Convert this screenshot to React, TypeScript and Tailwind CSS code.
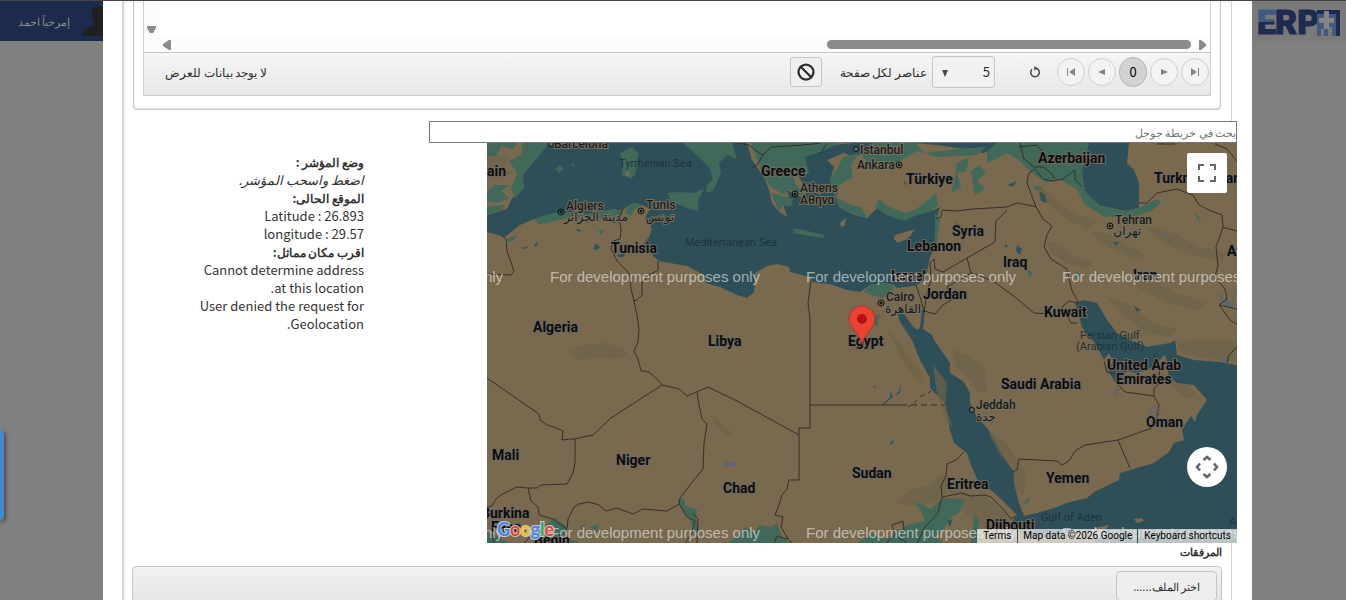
import { Ban } from 'lucide-react';

const SEA = '#2f4f58';
const LAND = '#78694f';
const GREEN = '#41695a';
const SCRUB = '#6c6349';

const greens = [
  'M0 0H30L26 6L14 3L10 12L0 14Z',
  'M36 0H62L50 15L36 32L37 45L28 55L24 46L30 30L22 18L34 12Z',
  'M0 48L8 42L22 42L14 48L22 55L10 60L0 58Z',
  'M0 63L18 62L14 68L0 71Z',
  'M47 76L67 70L80 69L100 71L127 66L136 68L132 77L104 74L80 75L60 80L52 81Z',
  'M139 66L147 60L156 62L148 66L144 73L138 70Z',
  'M20 96L30 92L26 98L21 99Z',
  'M111 88L118 86L114 92Z',
  'M264 0H352L336 8L318 14L322 30L314 33L304 24L308 40L321 56L302 46L297 52L284 44L276 32Z',
  'M284 50L306 56L304 64L296 62L292 69Z',
  'M350 26L356 14L372 10L385 0H428L438 10L470 6L499 4L490 12L450 14L430 8L410 20L380 18L372 10L364 22L366 34L352 42L350 55L364 62L374 64L380 75L366 71L352 64L343 37Z',
  'M392 56L400 63L418 70L428 67L440 58L449 50L451 62L444 68L430 72L417 78L400 72L388 64Z',
  'M448 70L453 76L450 100L446 110L448 92Z',
  'M470 20L482 14L479 28L470 30L474 44L464 50L468 34Z',
  'M484 28L492 22L499 30L490 38L498 46L488 52Z',
  'M510 0H602L595 30L598 48L612 62L640 68L654 64L670 56L674 60L664 68L645 74L618 74L598 62L590 46L572 36L560 40L545 30L533 18L520 10L500 20L500 8Z',
  'M377 149L383 142L397 140L408 144L402 152L394 155Z',
  'M388 173L393 171L390 184L387 180Z',
  'M190 357L197 356L199 363L210 367L209 376L212 386L208 392L202 374L196 368Z',
  'M60 381L68 375L80 384L78 394L92 400H45L52 390Z',
  'M92 384L98 382L96 388Z M103 384L112 381L110 390Z',
  'M0 389L12 394L22 400H0Z',
  'M258 384L268 390L272 382L284 384L290 380L294 392L302 400H240L252 392Z',
  'M370 400L385 391L400 396L420 382L438 378L434 368L427 358L444 366L455 355L478 356L472 370L466 372L458 384L450 394L456 400Z',
  'M488 370L492 378L491 400H484Z',
  'M536 360L543 354L542 359L538 361Z',
  'M540 126L546 130L542 135Z M588 130L594 132L590 138Z',
  'M708 70L715 77L710 76Z M545 42L556 45L550 48Z',
];

const scrubs = [
  'M0 2L8 12L24 14L14 26L26 30L10 36L0 34Z',
  'M80 208L96 202L118 200L136 206L140 212L128 216L110 214L92 218Z',
  'M560 98L576 104L588 114L606 120L600 126L580 120L564 110Z',
  'M604 88L624 92L640 102L658 112L648 116L626 106L610 98Z',
  'M656 82L690 92L712 104L740 110L735 118L704 112L676 100Z',
  'M640 130L668 138L690 150L720 160L712 168L680 160L650 144Z',
  'M620 154L640 160L666 180L690 186L684 194L660 190L636 172Z',
  'M400 186L414 200L424 216L436 232L432 240L418 222Z',
  'M464 206L484 214L498 224L500 250L490 248L482 236L470 224Z',
  'M502 290L518 298L530 318L540 330L536 352L528 346L526 326L512 310Z',
  'M410 360L424 346L446 342L450 334L462 330L460 346L452 358L430 364Z',
  'M684 240L702 242L708 252L698 256Z',
  'M690 198L750 197V219L708 214L692 208Z',
  'M224 272L238 284L246 290L240 292L230 284Z',
  'M446 222L460 240L458 262L466 286L456 272L450 250Z',
  'M462 346L500 354L520 372L524 386L498 384L480 372Z',
  'M550 40L570 58L590 72L612 78L600 86L576 74L556 56Z',
];

const lakes = [
  'M106 106L109 100L113 104L110 107Z',
  'M47 102L52 98L49 104Z M34 105L42 103L38 106Z',
  'M88 86L95 87L92 89Z',
  'M130 112L138 110L137 114L132 114Z',
  'M552 48L558 52L560 60L554 58Z',
  'M520 42L530 38L526 44Z',
  'M530 102L535 106L533 112L529 108Z M518 100L521 104L518 104Z',
  'M626 99L632 99L629 103Z',
  'M646 162L654 167L650 169Z',
  'M386 243L389 243L388 245Z M395 262L403 254L404 248L406 255L412 248L414 238L413 250L403 256L397 262Z',
  'M403 299L408 297L404 302Z',
  'M460 378L466 376L463 384Z',
  'M562 50L570 60L566 55Z',
  'M417 37L420 41L418 42Z',
  'M467 80L474 82L470 84Z',
];

const borders = [
  // Maghreb
  'M14 92L19 96L20 108L27 128L24 132L0 131',
  'M136 66L132 76L134 86L133 96L126 98L124 106L130 118L140 128L143 132L144 146L147 158L150 172L152 186L151 199L147 208L151 216L154 228L162 229L170 236L175 242',
  'M171 118L171 127L162 132L155 140L155 152L150 157L146 158',
  'M0 235L52 271L53 277L60 282L67 284L76 288L75 297L84 296L87 296L106 292L124 275L175 242L192 246L200 253L221 244L250 258L312 292',
  'M88 296V320L86 330L80 341L54 342L50 345L41 345L30 344L14 352L9 356L5 363L0 364',
  'M41 345L44 358L51 364L52 372L66 376L80 386L81 376L87 364L92 361L102 359L112 362L119 368L130 365L146 371L156 366L180 368L192 361L193 355L203 342L216 326L217 300L220 281L215 276L212 262L210 249',
  'M192 361L200 374L208 378L204 392L198 400 M206 370L211 376L210 400',
  // Egypt, Libya, Sudan
  'M324 138L321 160L323 176V285H312V337L302 337L300 346L295 352L292 362L288 372L296 374L294 384L301 396L305 400',
  'M323 262H420 M424 262H430 M434 262H440 M444 262H450 M454 262H458',
  'M421 264L424 262 M427 260L430 257 M433 254L438 251 M441 250L444 248',
  'M477 309L469 317L460 321L459 333L454 343L455 354L451 370L438 384L430 400',
  'M455 354L466 352L474 350L483 353L498 352L504 354L516 366L524 376L529 373',
  'M399 400L408 392L405 382L416 378L417 387L412 395L420 400',
  'M287 400L290 393L300 396',
  'M7 400L5 390 M37 400L44 393L50 400',
  // Levant and Iraq
  'M429 142L434 157L437 169L440 150L444 136L443 120L447 116L448 126L456 129L480 115L508 99L509 78L520 67',
  'M480 115L484 130L460 144L466 156L456 162L448 171L437 168',
  'M448 76L454 74L455 67L470 68L486 66L520 64L530 60L546 63L549 64',
  'M484 130L506 138L528 154L547 170L580 172L584 180L590 180',
  'M549 64L540 40L542 30L548 26L556 36L566 38L576 36L588 27L588 36L595 44',
  'M549 64L556 76L565 83L560 92L557 104L564 116L580 126L585 148L592 160',
  'M592 160L582 158L576 163L574 172',
  'M533 0L537 16L547 24L556 24L564 30L568 36 M532 4L550 2L562 16',
  'M250 0L262 2L268 7L276 12L270 22L264 26 M276 12L284 4L316 2L334 0 M334 10L340 0',
  'M652 60L660 60L670 50L690 46L706 52L712 62L724 68L735 72L736 84L729 104L731 122L728 134L738 146L740 156L732 162L744 178L750 181',
  'M735 84L750 88 M732 162L750 166 M670 1H688 M728 1L740 6L750 18',
  // Arabian peninsula
  'M525 329L530 327L532 316L570 318L575 322L582 318L588 308L598 302L631 297L643 325 M631 297L665 285',
  'M627 237L638 249L667 253L672 262L670 275 M667 253L667 245L674 240L672 228 M667 212L670 220',
  'M617 218L620 229L627 231 M740 221L742 212L750 204',
];

const countries: [string, number, number][] = [
  ['ain', 0, 33],
  ['Greece', 274, 33],
  ['Türkiye', 419, 41],
  ['Azerbaijan', 551, 20],
  ['Turkmenistan', 667, 40],
  ['Tunisia', 124, 110],
  ['Syria', 465, 93],
  ['Lebanon', 420, 108],
  ['Israel', 404, 138],
  ['Iraq', 516, 124],
  ['Iran', 646, 137],
  ['Af', 740, 113],
  ['Jordan', 436, 156],
  ['Kuwait', 557, 174],
  ['Algeria', 46, 189],
  ['Libya', 221, 203],
  ['Egypt', 361, 203],
  ['Saudi Arabia', 514, 246],
  ['United Arab', 620, 227],
  ['Emirates', 629, 241],
  ['Oman', 659, 284],
  ['Mali', 5, 317],
  ['Niger', 129, 322],
  ['Chad', 236, 350],
  ['Sudan', 365, 335],
  ['Eritrea', 460, 346],
  ['Yemen', 559, 340],
  ['Burkina', -6, 375],
  ['Faso', 4, 389],
  ['Benin', 47, 402],
  ['Djibouti', 499, 387],
];

const cities: [string, number, number][] = [
  ['Barcelona', 67, 5],
  ['Algiers', 79, 67],
  ['Tunis', 159, 66],
  ['Istanbul', 373, 11],
  ['Ankara', 370, 26],
  ['Athens', 313, 49],
  ['Αθήνα', 313, 61],
  ['Tehran', 628, 81],
  ['Cairo', 399, 158],
  ['Jeddah', 489, 266],
];

const arabicCities: [string, number, number][] = [
  ['مدينة الجزائر', 141, 78],
  ['تونس', 187, 78],
  ['تهران', 654, 92],
  ['القاهرة', 434, 170],
  ['جدة', 509, 278],
];

const seas: [string, number, number][] = [
  ['Tyrrhenian Sea', 132, 24],
  ['Mediterranean Sea', 198, 103],
  ['Persian Gulf', 593, 196],
  ['(Arabian Gulf)', 589, 207],
  ['Gulf of Aden', 554, 378],
  ['A', 742, 382],
];

const capitals = [
  [74, 69],
  [154, 68],
  [412, 22],
  [308, 51],
  [623, 83],
  [394, 160],
];

const towns = [
  [64, 1],
  [369, 6],
  [485, 267],
];

function MapDrawing() {
  return (
    <svg
      viewBox="0 0 750 400"
      preserveAspectRatio="xMidYMid slice"
      direction="ltr"
      className="block h-full w-full"
      role="img"
      aria-label="Map"
    >
      <rect width="750" height="400" fill={LAND} />
      <g fill={SEA}>
        <path d="M0 72L20 66L25 55L37 45L35 32L50 15L62 0H260L265 17L277 34L282 47L285 60L292 69L300 74L295 57L303 60L300 47L320 57L317 43L310 30L300 17L307 7L317 14L330 5L345 2L367 0H395L384 8L367 14L357 10L340 17L347 24L343 37L347 50L352 64L367 72L380 75L390 65L400 72L417 77L430 72L447 67L453 64L449 77L450 100L443 114L440 129L433 140L427 143L410 145L407 142L397 140L383 142L373 149L360 147L343 141L325 139L323 134L303 129L302 124L290 121L280 123L268 130L267 149L260 155L250 152L233 144L219 140L217 132L200 123L172 118L167 114L157 100L162 94L165 85L158 75L163 66L155 62L147 60L133 68L127 66L100 71L80 69L67 70L47 76L33 82L18 94L0 89Z" />
        <path d="M410 168L415 168L424 181L430 187L433 185L435 167L438 168L436 186L445 192L447 197L463 220L463 230L477 239L483 250L483 260L490 274L500 285L510 300L520 319L527 329L527 340L532 360L537 373L550 370L567 365L583 359L600 355L607 349L632 337L633 330L653 324L667 320L682 309L687 300L697 297L695 287L700 279L704 273L708 279L710 272L720 257L713 249L707 242L690 240L682 234L679 215L677 212L667 224L650 230L640 228L633 236L627 237L622 229L626 218L622 210L617 217L608 200L595 184L590 167L588 160L597 157L610 160L620 177L630 190L643 197L660 204L683 200L688 197L690 212L707 217L733 219L750 222V400H607L615 392L622 382L612 384L600 388L580 391L555 396L530 388L523 382L530 372L513 355L500 344L491 338L484 322L480 310L467 300L463 287L458 260L443 245L443 235L433 217L425 197L413 179Z" />
        <path d="M600 0H642L640 20L647 27L652 40L652 65L633 69L610 64L597 54V44L595 30Z" />
        <path d="M427 0H524L510 6L496 10L478 6L450 2Z M322 22L332 30L340 24L344 34L334 38Z" />
      </g>
      <g fill={LAND}>
        <path d="M657 4L668 0H690L678 5Z M647 376L655 375L657 378L650 380Z" />
        <path d="M408 92L415 90L428 86L424 92L420 96L411 100L407 96Z M353 80L359 75L358 82L354 84Z" />
      </g>
      <g fill={SCRUB} fillOpacity="0.7">
        {scrubs.map((d) => (
          <path key={d} d={d} />
        ))}
      </g>
      <g fill={GREEN}>
        <path d="M133 10L145 4L151 10L149 30L144 36L135 32L136 20Z M68 26L73 22L77 26L72 30Z M84 20L88 22L86 24Z M196 0H245L250 16L240 12L232 20L234 30L226 48L219 50L220 42L226 36L222 24L212 14Z M181 50L192 49L206 50L217 46L211 58L211 68L202 66L184 58Z" />
        <path d="M306 86L312 86L338 92L336 95L322 93L307 90Z" />
        {greens.map((d) => (
          <path key={d} d={d} />
        ))}
      </g>
      <path d="M138 30L142 27L143 32L140 34Z M374 54L379 53L377 60L374 58Z" fill={LAND} />
      <g fill="#31545c">
        {lakes.map((d) => (
          <path key={d} d={d} />
        ))}
      </g>
      <path
        d="M235 320L240 318L250 319L248 324L236 324Z M627 247L632 245L630 252L627 250Z M675 88L680 92L676 94Z M731 150L738 154L750 162L740 164L734 158Z M732 216L740 212L741 222Z"
        fill="#62666b"
      />
      <g fill="none" stroke="#35312a" strokeWidth="1">
        {borders.map((d) => (
          <path key={d} d={d} />
        ))}
      </g>
      <g fill="none" stroke="#62666b" strokeWidth="1">
        <circle cx="668" cy="269" r="5" />
        <path d="M668 261V277M660 269H676" />
      </g>

      <g fontFamily="Roboto, sans-serif" fontSize="11" fill="#1d3239">
        {seas.map(([name, x, y]) => (
          <text key={name} x={x} y={y}>
            {name}
          </text>
        ))}
      </g>
      <g
        fontFamily="Roboto, 'DejaVu Sans', sans-serif"
        fontSize="12"
        fontWeight="500"
        fill="#1b1b1b"
        stroke="#74705f"
        strokeWidth="2"
        paintOrder="stroke"
      >
        {cities.map(([name, x, y]) => (
          <text key={name} x={x} y={y}>
            {name}
          </text>
        ))}
        {arabicCities.map(([name, x, y]) => (
          <text key={name} x={x} y={y} textAnchor="end" fontWeight="400">
            {name}
          </text>
        ))}
      </g>
      <g fill="none" stroke="#101010">
        {capitals.map(([x, y]) => (
          <g key={x}>
            <circle cx={x} cy={y} r="3" />
            <circle cx={x} cy={y} r="1" fill="#101010" />
          </g>
        ))}
        {towns.map(([x, y]) => (
          <circle key={x} cx={x} cy={y} r="2.5" fill="#666" />
        ))}
      </g>
      <g
        fontFamily="Roboto, sans-serif"
        fontSize="14"
        fontWeight="700"
        fill="#0d0d0d"
        stroke="#6d6a62"
        strokeWidth="2"
        paintOrder="stroke"
      >
        {countries.map(([name, x, y]) => (
          <text key={name} x={x} y={y}>
            {name}
          </text>
        ))}
      </g>
      <g fontFamily="'Liberation Sans', sans-serif" fontSize="15" fill="#fff" fillOpacity="0.55">
        {[139, 395].map((y) =>
          [-194, 63, 319, 575].map((x) => (
            <text key={`${x}-${y}`} x={x} y={y}>
              For development purposes only
            </text>
          ))
        )}
      </g>

      {/* Marker */}
      <path
        d="M375 202C374 195 370 191 367 187C364 183 362 180 362 176C362 169 368 163 375 163C382 163 388 169 388 176C388 180 386 183 383 187C380 191 376 195 375 202Z"
        fill="#ea4335"
        stroke="#b9221a"
        strokeWidth="0.7"
      />
      <circle cx="375" cy="176" r="5" fill="#b31412" />
    </svg>
  );
}

function GoogleMap() {
  return (
    <div className="relative h-[400px] min-w-0 flex-1 overflow-hidden" dir="ltr">
      <MapDrawing />
      <button
        aria-label="Toggle fullscreen view"
        className="absolute right-[10px] top-[10px] flex h-10 w-10 items-center justify-center rounded-xs bg-white"
      >
        <svg viewBox="0 0 18 18" className="h-[18px] w-[18px]" fill="#666">
          <path d="M0 0v6h2V2h4V0H0zm16 0h-4v2h4v4h2V0h-2zm0 16h-4v2h6v-6h-2v4zM2 12H0v6h6v-2H2v-4z" />
        </svg>
      </button>
      <button
        aria-label="Map camera controls"
        className="absolute bottom-14 right-[10px] flex h-10 w-10 items-center justify-center rounded-full bg-white"
      >
        <svg viewBox="0 0 24 24" className="h-6 w-6" fill="none" stroke="#666" strokeWidth="2.6">
          <path d="M8.500 5L12 2L15.500 5M8.500 19L12 22L15.500 19M5 8.500L2 12L5 15.500M19 8.500L22 12L19 15.500" />
        </svg>
      </button>
      <a href="#google" aria-label="Google" className="absolute bottom-0 left-2 h-6 w-[62px]">
        <svg viewBox="0 0 62 24" className="h-6 w-[62px]">
          <text
            x="2"
            y="17"
            fontFamily="Lato, sans-serif"
            fontSize="18"
            fontWeight="700"
            stroke="#ccc"
            strokeWidth="2"
            paintOrder="stroke"
          >
            <tspan fill="#4285f4">G</tspan>
            <tspan fill="#ea4335">o</tspan>
            <tspan fill="#fbbc04">o</tspan>
            <tspan fill="#4285f4">g</tspan>
            <tspan fill="#34a853">l</tspan>
            <tspan fill="#ea4335">e</tspan>
          </text>
        </svg>
      </a>
      <div className="absolute bottom-0 right-0 flex h-[14px] bg-[#f5f5f5]/70 font-[Roboto,sans-serif] text-[10px] leading-[14px] text-black">
        <a href="#terms" className="px-[6px]">
          Terms
        </a>
        <span className="border-l border-[#2f4f58] px-[5px]">Map data ©2026 Google</span>
        <button className="border-l border-[#2f4f58] px-[6px]">Keyboard shortcuts</button>
      </div>
    </div>
  );
}

function PagerButton({ label, path }: { label: string; path: string }) {
  return (
    <button
      aria-label={label}
      className="flex h-7 w-7 items-center justify-center rounded-full border border-[#d0cfcf] bg-[#f4f3f3]"
    >
      <svg viewBox="0 0 10 10" className="h-[10px] w-[10px]" fill="#8b817d">
        <path d={path} />
      </svg>
    </button>
  );
}

function Grid() {
  return (
    <section className="mx-[10px] rounded-b border border-t-0 border-[#c9c9c9] px-[9px] pb-[13px] shadow-[inset_0_-1px_2px_#ddd]">
      <div className="border-x border-b border-[#d0d0d0]">
        <div className="flex h-9 flex-row-reverse items-end bg-white">
          <div className="flex h-full w-[15px] items-end justify-center bg-[#fcfcfc] pb-1">
            <svg viewBox="0 0 9 7" className="h-[7px] w-[9px]" fill="#8b8b8b">
              <path d="M0 0H9V2L6 7H3L0 2Z" />
            </svg>
          </div>
        </div>
        <div className="flex h-[15px] items-center bg-[#fcfcfc] pl-[19px] pr-[4px]">
          <svg viewBox="0 0 8 10" className="h-[10px] w-2" fill="#8b8b8b">
            <path d="M1 0H3L8 4V6L3 10H1Z" />
          </svg>
          <div className="mr-[7px] h-[9px] w-[364px] rounded-full bg-[#8b8b8b]" />
          <svg viewBox="0 0 8 10" className="mr-auto h-[10px] w-2" fill="#8b8b8b">
            <path d="M8 0H6L0 4V6L6 10H8Z" />
          </svg>
        </div>
        <div className="flex h-[43px] items-center border-t border-[#c4c4c4] bg-linear-to-b from-[#f6f6f6] to-[#e8e7e7] pb-1 pr-px text-xs text-[#2e2e2e]">
          <div className="flex items-center gap-[3px]">
            <PagerButton label="الصفحة الأولى" path="M1 1L7 5L1 9ZM8 1H9V9H8Z" />
            <PagerButton label="الصفحة السابقة" path="M2 2L9 5L2 8Z" />
            <span className="flex h-[30px] w-7 items-center justify-center rounded-full border border-[#b6b6b6] bg-[#d4d3d3] text-[13px] text-black">
              0
            </span>
            <PagerButton label="الصفحة التالية" path="M8 2L1 5L8 8Z" />
            <PagerButton label="الصفحة الأخيرة" path="M9 1L3 5L9 9ZM1 1H2V9H1Z" />
          </div>
          <button aria-label="تحديث" className="mr-[11px] p-[5px]">
            <svg viewBox="0 0 12 12" className="h-3 w-3" fill="none" stroke="#50443f" strokeWidth="1.500">
              <path d="M3 3.300A4.300 4.300 0 1 0 9 3.300L7 2.200" />
              <path d="M5 0.200L9 2.200L5.500 4.600Z" fill="#50443f" stroke="none" />
            </svg>
          </button>
          <div className="relative mr-[29px] h-8 w-[63px]">
            <select
              id="page-size"
              className="h-full w-full appearance-none rounded-[3px] border border-[#c5c5c5] bg-[#f2f1f1] pr-1 text-[13px]"
            >
              <option>5</option>
              <option>10</option>
              <option>20</option>
            </select>
            <svg
              viewBox="0 0 6 7"
              className="pointer-events-none absolute left-[10px] top-[14px] h-[7px] w-[6px]"
              fill="#50443f"
            >
              <path d="M0 0H6L3 7Z" />
            </svg>
          </div>
          <label htmlFor="page-size" className="mr-[5px]">
            عناصر لكل صفحة
          </label>
          <button
            aria-label="إلغاء"
            className="mr-[18px] flex h-[30px] w-8 items-center justify-center rounded-[3px] border border-[#c5c5c5] bg-[#f0efef]"
          >
            <Ban className="h-[18px] w-[18px]" strokeWidth={3} />
          </button>
          <span className="ml-[21px] mr-auto">لا يوجد بيانات للعرض</span>
        </div>
      </div>
    </section>
  );
}

function MarkerInfo() {
  return (
    <div className="w-[168px] pt-[10px] text-[13px] leading-[18px] text-[#333]">
      <b className="block text-xs leading-[18px]">وضع المؤشر :</b>
      <i className="block">اضغط واسحب المؤشر.</i>
      <b className="block text-xs leading-[18px]">الموقع الحالى:</b>
      <div>Latitude : 26.893</div>
      <div>longitude : 29.57</div>
      <b className="block text-xs leading-[18px]">اقرب مكان مماثل:</b>
      <div>Cannot determine address at this location.</div>
      <div>User denied the request for Geolocation.</div>
    </div>
  );
}

function Logo() {
  return (
    <svg viewBox="0 0 84 32" className="h-8 w-[84px]" role="img" aria-label="ERP">
      <defs>
        <linearGradient id="erp" x1="0" y1="0" x2="0" y2="1">
          <stop offset="0.500" stopColor="#43597f" />
          <stop offset="0.500" stopColor="#1d2b4f" />
        </linearGradient>
      </defs>
      <g
        direction="ltr"
        fontFamily="'Liberation Sans Narrow', Roboto, sans-serif"
        fontWeight="900"
        fontSize="34"
        strokeWidth="1"
      >
        <text x="0" y="29" fill="url(#erp)" stroke="url(#erp)">
          E
        </text>
        <text x="18" y="29" fill="#1d2b4f" stroke="#1d2b4f">
          RP
        </text>
      </g>
      <path d="M60 5H83V31H79V9H60Z" fill="#1d2b4f" />
      <path d="M60 9H79V31H75V22H71V31H67V24H64V31H60Z" fill="#43597f" />
      <path d="M67 6H72V13H77V18H72V24H67V18H62V13H67Z" fill="#858585" />
    </svg>
  );
}

export default function App() {
  return (
    <div
      dir="rtl"
      className="flex h-screen overflow-hidden border-t border-[#444] bg-[#808080] font-['Noto_Sans_CJK_SC','Liberation_Sans',sans-serif]"
    >
      <aside className="w-[94px] shrink-0">
        <div className="h-10 bg-[#7a7a7b] pr-[5px] pt-1">
          <Logo />
        </div>
      </aside>

      <main className="min-w-0 flex-1 bg-white pl-[19px] pr-5">
        <div className="min-h-full border-x border-[#d4d4d4] shadow-[inset_1px_0_2px_#ccc]">
          <Grid />

          <div className="-mr-[6px] mt-[11px] pl-[306px]">
            <input
              type="text"
              aria-label="بحث في خريطة جوجل"
              placeholder="بحث في خريطة جوجل"
              className="block h-[22px] w-full border border-[#767676] bg-white text-[11px] placeholder:text-[#757575]"
            />
          </div>
          <div className="-mr-[6px] flex gap-[123px] pl-[73px]">
            <GoogleMap />
            <MarkerInfo />
          </div>

          <h2 className="h-[23px] pr-[9px] text-[11px] font-bold leading-4 text-[#333]">المرفقات</h2>
          <div className="mx-[9px] flex rounded border border-[#c5c5c5] bg-linear-to-b from-[#f1f1f1] to-[#e6e5e5] p-1">
            <button className="h-[30px] rounded border border-[#c5c5c5] bg-[#efeeee] px-4 text-[11px] text-[#2e2e2e]">
              اختر الملف......
            </button>
          </div>
        </div>
      </main>

      <aside className="w-[103px] shrink-0">
        <div className="flex h-10 items-center gap-[13px] bg-[#1c2b4b] text-[11px] text-[#8a8a8a]">
          <svg viewBox="0 0 20 30" className="h-[30px] w-5 shrink-0" fill="#202022">
            <path d="M20 0H14C9 0 8 5 9 11C10 15 12 16 11 19C8 22 0 20 0 30H20Z" />
          </svg>
          <span className="whitespace-nowrap">إمرحباً احمد</span>
        </div>
        <button
          aria-label="القائمة"
          className="fixed left-0 top-[430px] h-[90px] w-1 rounded-r bg-[#428bca] shadow-[1px_2px_4px_#333]"
        />
      </aside>
    </div>
  );
}
